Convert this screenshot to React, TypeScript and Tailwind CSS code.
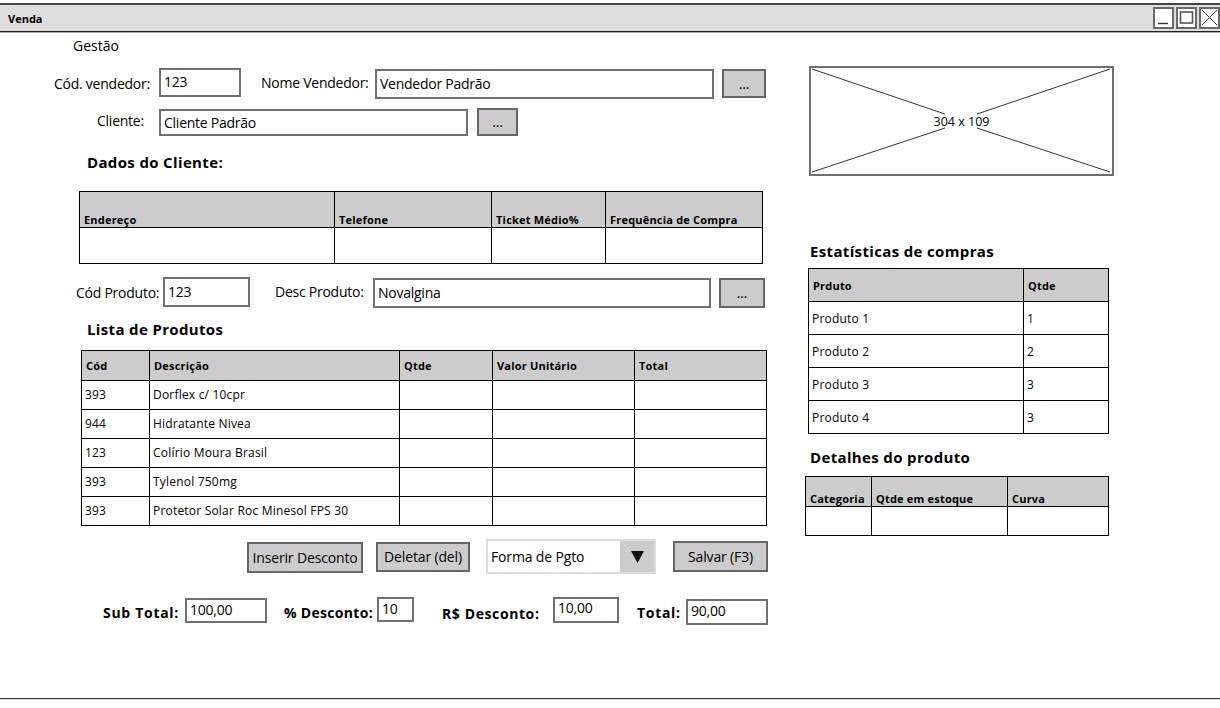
import React from "react";

const field = "flex items-center shrink-0 border-2 border-[#707070] bg-white pl-[3px] pr-[2px] text-[14px] tracking-[-0.25px] leading-none text-black";
const btn = "flex items-center justify-center shrink-0 whitespace-nowrap border-2 border-[#666] bg-[#cccccc] text-[14px] tracking-[-0.15px] leading-none text-black";
const h2 = "h-[24px] flex items-center text-[15px] font-bold tracking-[0.35px] text-black";
const label = "shrink-0 whitespace-nowrap text-[14px] tracking-[-0.25px] leading-none text-black";
const blabel = "shrink-0 whitespace-nowrap text-[14px] font-bold leading-none text-black";

function WinBtn({ children }: { children: React.ReactNode }) {
  return <div className="flex items-center justify-center w-[21px] h-[22px] border-2 border-[#6a6a6a] bg-white">{children}</div>;
}

function Table({ cols, width, head, rows, headH, rowH, bottom, cellCls = "" }: { cols: string[]; width: string; head: string[]; rows: string[][]; headH: string; rowH: string; bottom?: boolean; cellCls?: string }) {
  return (
    <table className={`table-fixed border-collapse ${width}`}>
      <colgroup>{cols.map((c, i) => <col key={i} className={c} />)}</colgroup>
      <thead>
        <tr className={headH}>
          {head.map((h, i) => (
            <th key={i} className={`border border-black bg-[#cccccc] px-[4px] text-left text-[11px] font-bold tracking-[0.2px] leading-none text-black whitespace-nowrap overflow-hidden ${bottom ? "align-bottom pb-[2px]" : "align-middle"}`}>{h}</th>
          ))}
        </tr>
      </thead>
      <tbody>
        {rows.map((r, i) => (
          <tr key={i} className={rowH}>
            {r.map((c, j) => (
              <td key={j} className={`border border-black bg-white px-[3px] text-[12px] tracking-[0.2px] leading-none text-black whitespace-nowrap ${cellCls}`}>{c}</td>
            ))}
          </tr>
        ))}
      </tbody>
    </table>
  );
}

export default function App() {
  return (
    <div className="w-[1220px] h-[708px] overflow-hidden bg-white font-['Open_Sans',sans-serif] text-black flex flex-col">
      <div className="mt-[3px] h-[29px] shrink-0 flex items-center justify-between bg-[#dedede] border-t-2 border-b border-t-[#444] border-b-[#222] shadow-[0_1px_0_#aaaaaa]">
        <span className="pl-[8px] text-[11px] font-bold leading-none">Venda</span>
        <div className="flex gap-[2px]">
          <WinBtn>
            <svg width="17" height="18" viewBox="0 0 17 18"><line x1="3" y1="14.5" x2="13" y2="14.5" stroke="#333" strokeWidth="1.4" /></svg>
          </WinBtn>
          <WinBtn>
            <svg width="17" height="18" viewBox="0 0 17 18"><rect x="2.5" y="3" width="12" height="11" fill="none" stroke="#555" strokeWidth="1.6" /></svg>
          </WinBtn>
          <WinBtn>
            <svg width="17" height="18" viewBox="0 0 17 18"><path d="M1 1L16 16M16 1L1 16" fill="none" stroke="#333" strokeWidth="1" /></svg>
          </WinBtn>
        </div>
      </div>

      <div className="flex h-[666px] shrink-0">
        <div className="w-[790px] shrink-0">
          <div className="h-[28px] pl-[73px] flex items-center text-[14px] leading-none">Gestão</div>

          <div className="mt-[8px] h-[31px] pl-[54px] flex items-start">
            <span className={`${label} w-[105px] mt-[9px]`}>Cód. vendedor:</span>
            <div className={`${field} w-[82px] h-[29px] pb-[1px]`}>123</div>
            <span className={`${label} w-[114px] ml-[20px] mt-[8px]`}>Nome Vendedor:</span>
            <div className={`${field} w-[339px] h-[30px] mt-[1px]`}>Vendedor Padrão</div>
            <div className={`${btn} w-[44px] h-[29px] ml-[8px] mt-[1px]`}>...</div>
          </div>

          <div className="mt-[9px] h-[28px] pl-[97px] flex items-start">
            <span className={`${label} w-[62px] mt-[6px]`}>Cliente:</span>
            <div className={`${field} w-[309px] h-[27px] mt-[1px]`}>Cliente Padrão</div>
            <div className={`${btn} w-[41px] h-[28px] ml-[9px]`}>...</div>
          </div>

          <div className={`${h2} mt-[14px] ml-[87px]`}>Dados do Cliente:</div>

          <div className="mt-[17px] ml-[79px]">
            <Table
              width="w-[683px]"
              cols={["w-[255px]", "w-[157px]", "w-[114px]", "w-[157px]"]}
              head={["Endereço", "Telefone", "Ticket Médio%", "Frequência de Compra"]}
              rows={[["", "", "", ""]]}
              headH="h-[36px]"
              rowH="h-[36px]"
              bottom
            />
          </div>

          <div className="mt-[13px] h-[31px] pl-[76px] flex items-start">
            <span className={`${label} w-[87px] mt-[9px]`}>Cód Produto:</span>
            <div className={`${field} w-[87px] h-[30px] pb-[1px]`}>123</div>
            <span className={`${label} w-[98px] ml-[25px] mt-[8px]`}>Desc Produto:</span>
            <div className={`${field} w-[338px] h-[30px] mt-[1px]`}>Novalgina</div>
            <div className={`${btn} w-[46px] h-[30px] ml-[8px] mt-[1px]`}>...</div>
          </div>

          <div className={`${h2} mt-[9px] ml-[87px]`}>Lista de Produtos</div>

          <div className="mt-[9px] ml-[81px]">
            <Table
              width="w-[685px]"
              cols={["w-[68px]", "w-[250px]", "w-[93px]", "w-[142px]", "w-[132px]"]}
              head={["Cód", "Descrição", "Qtde", "Valor Unitário", "Total"]}
              rows={[
                ["393", "Dorflex c/ 10cpr", "", "", ""],
                ["944", "Hidratante Nivea", "", "", ""],
                ["123", "Colírio Moura Brasil", "", "", ""],
                ["393", "Tylenol 750mg", "", "", ""],
                ["393", "Protetor Solar Roc Minesol FPS 30", "", "", ""],
              ]}
              headH="h-[30px]"
              rowH="h-[29px]"
            />
          </div>

          <div className="mt-[13px] h-[35px] pl-[247px] flex items-start">
            <div className={`${btn} w-[116px] h-[31px] mt-[3px] border-[#444]`}>Inserir Desconto</div>
            <div className={`${btn} w-[94px] h-[30px] mt-[3px] ml-[13px] border-[#555]`}>Deletar (del)</div>
            <div className="ml-[16px] w-[170px] h-[35px] shrink-0 flex border-2 border-[#dddddd] bg-white">
              <div className="flex-1 flex items-center pl-[3px] text-[14px] tracking-[-0.15px] leading-none">Forma de Pgto</div>
              <div className="w-[34px] flex items-center justify-center bg-[#cccccc]">
                <svg width="13" height="12" viewBox="0 0 13 12"><polygon points="0,0 13,0 6.5,12" fill="#111" /></svg>
              </div>
            </div>
            <div className={`${btn} w-[95px] h-[31px] mt-[2px] ml-[17px]`}>Salvar (F3)</div>
          </div>

          <div className="mt-[23px] h-[27px] pl-[103px] flex items-start">
            <span className={`${blabel} tracking-[0.7px] w-[82px] mt-[9px]`}>Sub Total:</span>
            <div className={`${field} w-[82px] h-[25px] mt-[1px] pb-[1px]`}>100,00</div>
            <span className={`${blabel} tracking-[0.3px] w-[93px] ml-[17px] mt-[9px]`}>% Desconto:</span>
            <div className={`${field} w-[37px] h-[25px] pb-[2px] text-[13px]`}>10</div>
            <span className={`${blabel} tracking-[0.6px] w-[111px] ml-[28px] mt-[10px]`}>R$ Desconto:</span>
            <div className={`${field} w-[66px] h-[26px] pb-[4px]`}>10,00</div>
            <span className={`${blabel} tracking-[0.7px] w-[49px] ml-[18px] mt-[9px]`}>Total:</span>
            <div className={`${field} w-[82px] h-[26px] mt-[2px] pb-[2px]`}>90,00</div>
          </div>
        </div>

        <div className="flex-1 pl-[15px]">
          <div className="relative mt-[34px] ml-[4px] w-[305px] h-[110px] flex items-center justify-center border-2 border-[#707070] bg-white">
            <svg className="absolute left-0 top-0" width="301" height="106" viewBox="0 0 301 106">
              <path d="M1 1L134 46M166 46L299 1M1 104L134 60M166 60L299 104" fill="none" stroke="#333" strokeWidth="1" />
            </svg>
            <span className="relative pt-[2px] text-[12.5px] leading-none">304 x 109</span>
          </div>

          <div className={`${h2} mt-[63px] ml-[5px]`}>Estatísticas de compras</div>
          <div className="mt-[5px] ml-[3px]">
            <Table
              width="w-[300px]"
              cols={["w-[215px]", "w-[85px]"]}
              head={["Prduto", "Qtde"]}
              rows={[
                ["Produto 1", "1"],
                ["Produto 2", "2"],
                ["Produto 3", "3"],
                ["Produto 4", "3"],
              ]}
              headH="h-[33px]"
              rowH="h-[33px]"
              cellCls="pt-[2px]"
            />
          </div>

          <div className={`${h2} mt-[11px] ml-[5px]`}>Detalhes do produto</div>
          <div className="mt-[7px]">
            <Table
              width="w-[303px]"
              cols={["w-[66px]", "w-[136px]", "w-[101px]"]}
              head={["Categoria", "Qtde em estoque", "Curva"]}
              rows={[["", "", ""]]}
              headH="h-[30px]"
              rowH="h-[29px]"
              bottom
            />
          </div>
        </div>
      </div>

      <div className="h-[2px] shrink-0 border-t border-[#333] bg-[#dddddd]" />
    </div>
  );
}
